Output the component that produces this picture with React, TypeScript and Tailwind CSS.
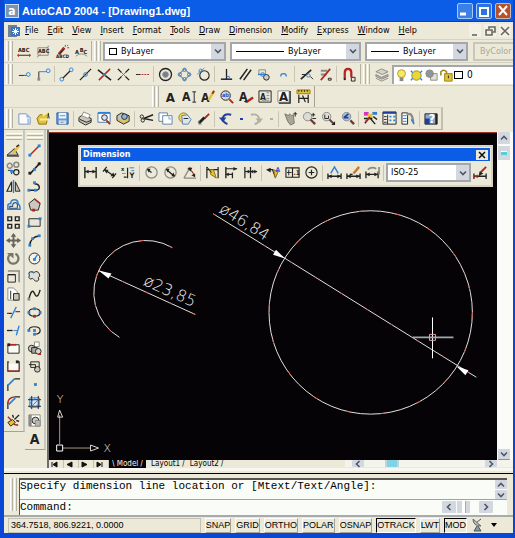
import { Fragment, type ReactNode } from 'react';

type Shape = {
  d?: string;
  s?: string;
  f?: string;
  w?: number;
  text?: string;
  x?: number;
  y?: number;
  size?: number;
};

const K = '#222222';
const B = '#2f7fd6';
const R = '#b3261e';
const G = '#8a8a86';
const Y = '#e3c23a';

const line = (d: string, s = K, w = 1): Shape => ({ d, s, w });
const fill = (d: string, f = K, s = 'none'): Shape => ({ d, f, s });
const label = (text: string, x: number, y: number, size: number, f = K): Shape => ({ text, x, y, size, f });

const dot = (x: number, y: number, c = B) => fill(`M${x - 1.5} ${y - 1.5}h3v3h-3z`, c);
const ring = (x: number, y: number, r: number, c = B, w = 1) =>
  line(`M${x - r} ${y}a${r} ${r} 0 1 0 ${r * 2} 0a${r} ${r} 0 1 0 ${-r * 2} 0`, c, w);
const disc = (x: number, y: number, r: number, f: string, s = K) =>
  fill(`M${x - r} ${y}a${r} ${r} 0 1 0 ${r * 2} 0a${r} ${r} 0 1 0 ${-r * 2} 0z`, f, s);

const icons: Record<string, Shape[]> = {
  // express text tools
  'Remote Text': [label('ABC', 1, 9, 6), line('M2 12h11', K), fill('M2 10v4l-2-2zM13 10v4l2-2z', R)],
  'Text Mask': [line('M2 4h11v8H2z', G), label('ABC', 2, 10, 6), line('M1 14L5 11M11 4l3-2', G)],
  'Explode Text': [label('ABCD', 1, 15, 5), line('M4 11L10 4', R, 3), line('M9 6L5 10', K), line('M11 1v2M15 4h-2M14 1l-1 1', R)],
  'Arc Aligned Text': [label('A', 1, 11, 6), label('B', 6, 8, 6), label('C', 10, 11, 6), line('M2 13q6-5 12 0', G)],
  // object snaps
  'Temporary Track Point': [line('M2 9h8', K), ring(12, 8, 2), line('M7 9h3', B)],
  'Snap From': [line('M3 14V5', K), line('M3 5h8', B), ring(13, 4, 2), dot(3, 13, G)],
  Endpoint: [line('M4 12L12 4', K, 1.3), ring(3, 13, 2), ring(13, 3, 2)],
  Midpoint: [line('M2 14L14 2', K, 1.3), ring(8, 8, 2)],
  Intersection: [line('M1 3l14 11', K, 1.6), line('M2 14L14 2', R, 1.6), dot(8, 8)],
  'Apparent Intersection': [line('M2 2l4 4M10 10l4 4M2 14l4-4M10 6l4-4', K, 1.5), line('M6 6l4 4M6 10l4-4', B)],
  Extension: [line('M1 8h5', K), line('M7 8h2M10 8h2M13 8h2', R)],
  Center: [ring(8, 8, 6.4, K, 1.4), disc(8, 8, 3, G, G), ring(8, 8, 1.5, B)],
  Quadrant: [line('M8 2l6 6-6 6-6-6z', G, 1.2), ring(8, 3, 1.8), ring(3, 8, 1.8), ring(13, 8, 1.8), ring(8, 13, 1.8)],
  Tangent: [ring(9, 9, 5, K, 1.2), line('M1 8L9 1', G), ring(5, 4, 1.8)],
  Perpendicular: [line('M8 2v11', K, 1.4), line('M2 13h12', K, 1.6), line('M8 10h3v3', B)],
  Parallel: [line('M2 13L10 2M6 14L14 3', K, 1.6)],
  Insert: [line('M2 3h7v5H2z', G), disc(10, 11, 3, '#cfcfc8', K), line('M1 8h7', B, 1.4), ring(6, 8, 2)],
  Node: [line('M5 10a3 3 0 0 1 6 0', B, 1.3)],
  Nearest: [line('M2 13L13 3', K, 1.7), line('M3 8h4M12 10l3 3', K), ring(10, 9, 1.8)],
  'Snap None': [line('M3 4h7M3 8h6', G, 2), line('M3 14L13 2', R, 1.8), line('M11 12h3v2h-3z', K)],
  'Object Snap Settings': [line('M4 13V6q0-4 3.500-4T11 6v5', R, 2.4), line('M3 13h2', K, 2), line('M11 11h4v4h-4z', K)],
  Layers: [fill('M2 5l6-3 7 3-6 3z', '#d6d3c2', G), fill('M2 8l6 3 7-3v2l-7 3-6-3z', '#b6b3a4', G), line('M2 12l6 3 7-3', G)],
  Bulb: [disc(8, 6, 4.2, '#f6e96a', '#b09a20'), fill('M6 10h4v4H6z', G)],
  Sun: [disc(8, 8, 5, '#ecd632', '#9b8a10'), line('M2 3l2 2M14 3l-2 2M2 13l2-2M14 13l-2-2', B, 1.4)],
  'Viewport Freeze': [fill('M7 6h7v7H7z', '#e2e2da', G), disc(6, 6, 4, '#8e959d', G)],
  Unlock: [line('M2 8V4q3-3 6 0v4', '#9b8210', 1.6), fill('M6 6h8v8H6z', Y, '#9b8210'), line('M10 8v3', K)],
  // text
  'Multiline Text': [label('A', 3, 14, 14)],
  'Single Line Text': [label('A', 0, 13, 13), line('M13 3v11M11 3h4M11 14h4', K)],
  'Edit Text': [label('A', 0, 14, 13), line('M14 2L8 12', Y, 2.6), line('M14 2l-2 3', R, 2)],
  'Find and Replace': [disc(6, 7, 5, '#d8d8d2', K), label('ab', 2, 9, 6, '#2f4fd6'), line('M10 11l4 4', R, 2)],
  'Text Style': [label('A', 0, 13, 13), line('M15 9l-7 5', R, 2.6), fill('M5 13l4-1-1 3z', K)],
  'Scale Text': [line('M1 2h13v12H1z', K), label('A', 2, 12, 9), line('M9 4h3M9 7h3M9 10h3M4 12h8', G)],
  'Justify Text': [fill('M1 2h12v12H1z', '#ffffff', G), line('M14 2v13H2', K, 1.4), label('A', 2, 13, 14)],
  'Convert Distance': [fill('M1 1h14v4H1z', Y, '#9b8210'), line('M3 1v2M6 1v2M9 1v2M12 1v2', K), line('M3 6v9M13 6v9M3 10h10M7 7l3 7', K, 1.3)],
  // standard
  New: [fill('M2 3h8l4 4v7H2z', '#fbfbff', '#7893b8'), fill('M10 3l4 4h-4z', '#8ab4e8'), line('M12 8v6', '#9fc0e8', 2)],
  Open: [fill('M1 8l3-4h9l-2 10H3z', Y, '#8b7410'), line('M7 5l7-4M4 9h9', '#f7eda0', 2), line('M13 2l1 6', K)],
  Save: [fill('M2 2h12v12H2z', '#5f9be0', '#2a5c9c'), fill('M4 2h8v6H4z', '#eef4fb'), fill('M4 10h8v4H4z', '#d8dde4'), line('M5 5h6M6 12h3', G)],
  Plot: [fill('M1 7l4-3 9 4v4l-6 3-7-4z', '#c9c6b8', K), fill('M4 5l2-4 7 3-2 4z', '#ffffff', G), line('M2 9l7 3 5-2', K)],
  'Plot Preview': [fill('M1 2h13v10H1z', '#ffffff', '#4a78b0'), line('M1 2h13', B, 2), disc(8, 7, 3, '#cfe4f7', K), line('M10 10l4 4', R, 2)],
  Publish: [fill('M1 5l5-3 8 3v6l-6 3-7-4z', '#c9c6b8', K), disc(9, 6, 3, '#8fb6dd', K), line('M3 9l5 3 5-3', Y, 2)],
  Cut: [line('M5 8L15 4M5 8l10 2', K, 1.5), ring(3, 6, 1.8, K), ring(4, 10, 1.8, K)],
  Copy: [fill('M1 2h9v9H1z', '#ffffff', '#6080a8'), fill('M5 5h10v9H5z', '#ffffff', '#6080a8'), fill('M11 5l4 4h-4z', '#9fc0e8')],
  Paste: [disc(7, 7, 5, '#ead76c', '#9b8210'), fill('M5 5l6-1 4 5-3 5H6z', '#dfe5ea', '#557fae'), line('M7 8h5', K)],
  'Match Properties': [line('M14 3L9 8', R, 2), line('M9 7L3 13', K, 3), line('M3 10v4h3', G)],
  Undo: [line('M4 8Q5 2 13 4M4 8q0 4 5 6', '#203f9c', 2.2), fill('M0 7h8l-4 5z', '#203f9c')],
  Redo: [line('M2 4q8-2 9 5M6 14q4-1 5-5', '#b3b0a0', 2), fill('M7 8h8l-4 5z', '#b3b0a0')],
  'Pan Realtime': [fill('M2 3l4 2 1-2 2 2 2-1 1 9-4 2-3-4z', '#aaa594', '#77756c'), line('M13 1v5M11 3h4', K)],
  'Zoom Realtime': [disc(6, 6, 4.5, '#dcdcd6', G), line('M9 9l5 5', '#6b3d36', 2.4), line('M12 2v4M10 4h4M11 8h4', K)],
  'Zoom Window': [disc(6, 6, 4.5, '#dcdcd6', G), line('M4 4v4h4V5', K), line('M9 9l5 5', '#6b3d36', 2.2), fill('M11 15h4v-4z')],
  'Zoom Previous': [disc(7, 6, 4.5, '#a8bfdf', G), line('M11 10l4 4', '#6b3d36', 2.4), line('M4 7l5-4M4 7h5', '#203f9c', 1.8)],
  Properties: [fill('M1 1h5v4H1z', '#d833c0'), fill('M5 3h5v4H5z', Y), fill('M10 1h5v3h-5z', B), line('M1 8h9M2 13L7 7l6 7M11 6l4 3', K, 1.5), line('M3 11l4-4', R, 2)],
  'Design Center': [fill('M1 1h14v13H1z', '#f4f1df', K), line('M1 2h14', '#203f9c', 2), line('M6 4v10', K), fill('M8 5h2v2H8zM12 5h2v2h-2zM8 9h2v2H8zM12 9h2v2h-2z', B), line('M2 6h3M2 9h3M2 12h3', K)],
  'Tool Palettes': [fill('M1 2h6v12H1z', '#ffffff', K), line('M2 5h4M2 8h4M2 11h4', B), line('M6 4q6-4 7 8', G, 2.4), line('M11 9l3 5', B, 1.6)],
  Help: [fill('M1 3h13v11H1z', '#8fa9c6', K), fill('M1 8h5v6H1z', '#203f9c'), label('?', 5, 13, 13, '#ffffff'), line('M13 3v11', K, 2)],
  // modify
  Erase: [fill('M1 13L9 6l4 7z', '#c7c4b4', K), line('M14 3L8 10', Y, 2.6), line('M1 14h13', K), line('M11 4l3-2', K, 1.5)],
  'Copy Object': [ring(4, 5, 2.6, G, 1.6), ring(11, 4, 2.6, G, 1.6), ring(11, 12, 2.8, K, 1.3), line('M2 10h4v4', K), dot(6, 11, B)],
  Mirror: [line('M1 13L6 3v10z', K, 1.2), line('M8 1v14', B, 1.4), fill('M15 13L10 3v10z', '#c7c4b4', K)],
  Offset: [line('M2 13V9q0-2 3-2 0-4 4-4t4 5q2 0 2 5z', B, 1.6), line('M4 12v-2h3q0-4 3-4t2 6z', '#39547a', 1.2)],
  Array: [line('M2 2h4v4H2zM10 2h4v4h-4zM2 10h4v4H2zM10 10h4v4h-4z', K, 1.5)],
  Move: [line('M8 2v12M2 8h12', '#66645c', 2), fill('M8 0l3 4H5zM8 16l3-4H5zM0 8l4-3v6zM16 8l-4-3v6z', '#66645c')],
  Rotate: [line('M4 4a5.500 5.500 0 1 0 6-1', '#77756c', 2.4), fill('M1 2h7v6z', '#77756c')],
  Scale: [line('M2 2h12v12', G, 1.6), line('M2 6h8v8H2z', K), line('M2 6h8', K, 1.4)],
  Stretch: [fill('M2 1h6l4 4v9H2z', '#ffffff', G), fill('M8 7h6v7H8z', '#c7c4b4', K), line('M5 4v9', K)],
  Trim: [line('M1 9h5M10 7h5', R, 1.3), line('M11 2L5 14', B, 1.4), line('M3 9h3', K)],
  Extend: [line('M1 8h6', K, 1.4), line('M8 8h4', B), line('M14 3l-3 10', B, 1.4)],
  'Break at Point': [fill('M2 4h12v9H2z', '#fbfbf6', K), line('M2 4h9', R, 1.8), dot(3, 4, K)],
  Break: [line('M3 3H2v10h12V3h-3', K, 1.3), fill('M3 5h10v7H3z', '#fbfbf6'), line('M2 13h12', R, 1.6), dot(12, 3, K)],
  Chamfer: [line('M2 15V8M9 2h6', K, 1.3), line('M2 9L9 2', B, 1.8)],
  Fillet: [line('M2 15V8M9 2h6', K, 1.3), line('M2 9q0-6 7-7', R, 1.6), line('M3 10L10 3', B, 1.8)],
  Explode: [fill('M2 10l5-3 3 3-5 4z', Y, K), line('M9 7l5-5M11 8l3 1M8 5L7 2', K, 1.5), line('M2 4l4 4M8 12l5 1', R, 1.5)],
  // draw
  Line: [line('M3 13L13 3', R, 1.6), dot(3, 13), dot(13, 3)],
  'Construction Line': [line('M3 14L14 2', K, 1.6), dot(8, 9, B), dot(3, 13, K), dot(13, 3, K)],
  Polyline: [line('M2 12h8q4-1 3-4T8 5', K, 1.5), dot(2, 12), dot(9, 12), dot(8, 4)],
  Polygon: [fill('M8 2l6 5-2 7H4L2 7z', '#c9c9c2', K), line('M8 2l6 5', R, 1.6), dot(7, 14, R)],
  Rectangle: [fill('M2 4h12v8H2z', '#e6e6df', K), dot(2, 12), dot(14, 4)],
  Arc: [line('M3 14Q3 4 14 3', K, 1.5), dot(3, 13), dot(6, 6), dot(13, 3)],
  Circle: [disc(8, 8, 5.8, '#f4f2e6', K), line('M8 9l3-5', B, 1.5), dot(8, 9)],
  'Revision Cloud': [fill('M2 4q2-3 5 0 4-3 6 1 2 3-1 4 2 4-3 4-2-2-3-3-3 2-4-1 1-2-0-5z', '#dfdfd8', K), line('M3 3h4', B, 1.5)],
  Spline: [line('M2 13Q5 0 8 7t6-4', K, 1.5), dot(2, 13, G)],
  Ellipse: [line('M2 8q0-4 6-4t6 4-6 4-6-4z', K, 1.3), dot(2, 8), dot(14, 8), dot(8, 4), dot(8, 12, R)],
  'Ellipse Arc': [line('M2 8q0-4 6-4t6 4-6 4', K, 1.3), dot(2, 8), dot(8, 12), dot(8, 8)],
  'Insert Block': [fill('M8 1h5v5H8z', '#ffffff', G), disc(5, 8, 3.5, '#c9c9c2', K), fill('M5 7h6v6H5z', '#a9a99f', K), disc(12, 11, 3, '#d8d8d0', K), fill('M11 15h4v-3z', R)],
  'Make Block': [fill('M4 3h9v6H4z', '#e6e3d0', K), disc(11, 11, 3, '#c9c9c2', K), line('M2 6h7v4', K)],
  Point: [dot(9, 8)],
  Hatch: [fill('M3 3h10v10H3z', '#d6e6f7', B), line('M1 5h14M1 12h14M5 1v14M12 1v14', K), line('M3 9l6-6M4 13l9-9M9 13l4-4', B)],
  Region: [fill('M2 2h12v12H2z', '#ffffff', G), fill('M2 2h3v12H2z', '#8a8a86'), disc(9, 8, 3.6, '#c9c9c2', K), fill('M9 8h5v6H9z', '#b9b9b2', G)],
  'Text A': [label('A', 3, 14, 15)],
  // dimension
  'Linear Dimension': [line('M2 2v12M14 2v12', K, 1.5), line('M2 7h12', K, 1.3), fill('M2 7l4-2v4zM14 7l-4-2v4z')],
  'Aligned Dimension': [line('M3 5l10 7M1 7l4-5M11 14l4-5', K, 1.3), fill('M2 5l5 0-2 4zM14 12H9l3-4z')],
  'Ordinate Dimension': [line('M7 3v11M3 13h3', K, 1.3), label('x', 0, 6, 6), label('Y', 9, 14, 8), line('M9 3h5M11 6h3', B), line('M1 9h4', G)],
  'Radius Dimension': [ring(8, 8, 6, G, 1.3), line('M8 8L4 5', K, 1.4), fill('M3 4l4 0-2 4z')],
  'Diameter Dimension': [ring(8, 8, 6, G, 1.3), line('M4 5l8 7', K, 1.4), fill('M3 4h4L5 8zM13 12H9l2-4z')],
  'Angular Dimension': [line('M2 14h13M2 14L9 2', G, 1.3), line('M6 4q6 2 7 8', R, 1.3), fill('M6 3h5L9 7zM14 13l-4-2 4-2z')],
  'Quick Dimension': [line('M2 2v12M14 2v12M2 5h12', K, 1.3), fill('M5 5l4 0 3 9-6-4z', Y, '#8b6b10'), line('M2 2l5 6', K)],
  'Baseline Dimension': [line('M2 2v12', K, 1.5), line('M2 4h12M2 10h7M9 8v6', K, 1.3), fill('M14 4l-4-2v4zM2 10l3-2v4z')],
  'Continue Dimension': [line('M2 2v12M8 2v12', K, 1.3), line('M2 7h13', K, 1.3), fill('M8 7L5 5v4zM8 7l3-2v4zM15 7l-3-2v4z')],
  'Quick Leader': [line('M2 5h5l3 8', K, 1.3), fill('M0 5l5-2v5z'), fill('M8 5l5 2-3 7z', Y, '#8b6b10'), label('A', 10, 7, 7, '#2f4fd6')],
  Tolerance: [line('M1 3h14v10H1zM8 3v10', K, 1.2), line('M2 8h5M4 5v6', K), label('.1', 9, 11, 7)],
  'Center Mark': [ring(8, 8, 6, K, 1.2), line('M8 5v6M5 8h6', K, 1.3)],
  'Dimension Edit': [line('M1 9v6M15 9v6M1 12h14', K, 1.4), line('M4 9l4-7 4 7', B, 1.5), fill('M1 12l4-2v4zM15 12l-4-2v4z', K)],
  'Dimension Text Edit': [line('M1 9v6M15 9v6M1 12h14', K, 1.4), line('M14 2L8 9', '#c87933', 2.6), line('M7 10H4', K, 1.5), fill('M1 12l4-2v4zM15 12l-4-2v4z', K)],
  'Dimension Update': [line('M1 7v7M14 7v7M1 10h13', K, 1.4), line('M3 5q4-4 9-1M15 2v8', G, 1.8), fill('M1 10l4-2v4zM14 10l-4-2v4z')],
  'Dimension Style': [line('M1 9v6M14 9v6M1 12h13', K, 1.4), line('M14 2L8 8', R, 2), fill('M6 12l1-5 4 2z'), fill('M1 12l4-2v4z', R)],
};

function Icon({ name }: { name: string }) {
  return (
    <svg viewBox="0 0 16 16" className="block h-[15px] w-[15px] shrink-0" aria-hidden="true">
      {icons[name].map((shape, i) =>
        shape.text ? (
          <text key={i} x={shape.x} y={shape.y} fontSize={shape.size} fill={shape.f} className="font-bold">
            {shape.text}
          </text>
        ) : (
          <path key={i} d={shape.d} stroke={shape.s} fill={shape.f ?? 'none'} strokeWidth={shape.w ?? 1} />
        ),
      )}
    </svg>
  );
}

function ToolButton({ name }: { name: string }) {
  return (
    <button type="button" aria-label={name} className="flex h-[18px] w-[19px] shrink-0 items-center justify-center">
      <Icon name={name} />
    </button>
  );
}

function Grip() {
  return (
    <div className="mx-[2px] flex shrink-0 gap-px self-stretch">
      <div className="w-[3px] border-l border-r border-l-white border-r-[#b5b2a1]" />
      <div className="w-[3px] border-l border-r border-l-white border-r-[#b5b2a1]" />
    </div>
  );
}

function Separator() {
  return <div className="mx-px h-4 w-[2px] shrink-0 border-l border-[#c8c5b2]" />;
}

function Tools({ groups }: { groups: string[][] }) {
  return (
    <>
      {groups.map((group, i) => (
        <Fragment key={i}>
          {i > 0 && <Separator />}
          {group.map((name) => (
            <ToolButton key={name} name={name} />
          ))}
        </Fragment>
      ))}
    </>
  );
}

function Chevron({ className = '' }: { className?: string }) {
  return (
    <svg viewBox="0 0 8 8" className={`h-2 w-2 ${className}`} aria-hidden="true">
      <path d="M1 2.500l3 3 3-3" fill="none" stroke="#4d5766" strokeWidth="1.600" />
    </svg>
  );
}

type ComboProps = { name: string; value: string; className: string; pad: string; mark?: ReactNode; disabled?: boolean };

function Combo({ name, value, className, pad, mark, disabled }: ComboProps) {
  return (
    <div className={`relative h-[19px] border-2 ${disabled ? 'border-[#c9c7ba]' : 'border-[#a3a6ab] bg-white'} ${className}`}>
      <select
        aria-label={name}
        disabled={disabled}
        className={`block h-full w-full appearance-none bg-transparent text-[9px] leading-none ${pad} ${disabled ? 'text-[#aaa899] opacity-100' : 'text-black'}`}
      >
        <option>{value}</option>
      </select>
      {mark}
      {!disabled && (
        <span className="pointer-events-none absolute inset-y-0 right-0 flex w-[13px] items-center justify-center bg-[#d3d7de]">
          <Chevron />
        </span>
      )}
    </div>
  );
}

function TitleBar() {
  return (
    <header className="flex h-[22px] items-center border-b border-[#0a3fb4] bg-[#0b5ce6] pl-px">
      <span className="mr-[3px] flex h-[14px] w-[14px] items-center justify-center border border-[#cfe0f7] bg-[#7d95ac] text-[12px] font-bold leading-none text-white">
        a
      </span>
      <h1 className="flex-1 truncate font-['Liberation_Sans'] text-[11px] font-bold leading-[14px] text-white">
        AutoCAD 2004 - [Drawing1.dwg]
      </h1>
      <div className="flex gap-[3px] pr-[2px] pt-px">
        <button type="button" aria-label="Minimize" className="h-4 w-4 rounded-[2px] border border-[#a8c8f5] bg-[#3a80e6]">
          <svg viewBox="0 0 14 14"><path d="M2 10h6" stroke="#fff" strokeWidth="3" /></svg>
        </button>
        <button type="button" aria-label="Maximize" className="h-4 w-4 rounded-[2px] border border-[#a8c8f5] bg-[#2c72e0]">
          <svg viewBox="0 0 14 14"><path d="M3 4v8h8V4M2 4h10" fill="none" stroke="#fff" strokeWidth="2" /></svg>
        </button>
        <button type="button" aria-label="Close" className="h-4 w-4 rounded-[2px] border border-[#cdb9ae] bg-[#b5512c]">
          <svg viewBox="0 0 14 14"><path d="M3 2l8 9M11 2l-8 9" stroke="#fff" strokeWidth="2" /></svg>
        </button>
      </div>
    </header>
  );
}

const menus = ['File', 'Edit', 'View', 'Insert', 'Format', 'Tools', 'Draw', 'Dimension', 'Modify', 'Express', 'Window', 'Help'];

function MenuBar() {
  return (
    <nav className="flex h-[18px] items-center border-b border-[#d5d2c1] pl-1">
      <svg viewBox="0 0 12 12" className="mr-[5px] h-3 w-3" aria-hidden="true">
        <path d="M0 0h9v12H0z" fill="#6e8195" />
        <path d="M3 2h9v9H3z" fill="#2f76cf" />
        <path d="M7.500 3v7M4 6.500h7M5 4l5 5M10 4L5 9" stroke="#fff" />
      </svg>
      <div className="flex flex-1 gap-[9px] text-[9px] leading-none">
        {menus.map((menu) => (
          <button key={menu} type="button">
            <span className="underline underline-offset-1">{menu[0]}</span>
            {menu.slice(1)}
          </button>
        ))}
      </div>
      <div className="flex gap-[3px] pr-[2px]">
        {[
          ['Minimize drawing', 'M3 10h5'],
          ['Restore drawing', 'M5 4V2h6v5H9M2 5h6v5H2z'],
          ['Close drawing', 'M2 2l8 8M10 2l-8 8'],
        ].map(([name, d]) => (
          <button key={name} type="button" aria-label={name} className="h-[13px] w-3 bg-[#f3f1e6]">
            <svg viewBox="0 0 12 12"><path d={d} fill="none" stroke="#68675f" strokeWidth="1.600" /></svg>
          </button>
        ))}
      </div>
    </nav>
  );
}

function Toolbars() {
  return (
    <>
      <div className="flex h-[23px] items-center overflow-hidden border-b border-[#d5d2c1] py-px">
        <Grip />
        <Tools groups={[['Remote Text', 'Text Mask', 'Explode Text', 'Arc Aligned Text']]} />
        <div className="w-1 self-stretch border-r border-[#b5b2a1]" />
        <Grip />
        <Combo
          name="Color"
          value="ByLayer"
          className="w-[123px] shrink-0"
          pad="pl-4"
          mark={<span className="pointer-events-none absolute left-1 top-1 h-[7px] w-2 border border-black" />}
        />
        <Combo
          name="Linetype"
          value="ByLayer"
          className="ml-1 w-[131px] shrink-0"
          pad="pl-14"
          mark={<span className="pointer-events-none absolute left-1 top-[7px] h-px w-12 bg-black" />}
        />
        <Combo
          name="Lineweight"
          value="ByLayer"
          className="ml-1 w-[103px] shrink-0"
          pad="pl-9"
          mark={<span className="pointer-events-none absolute left-1 top-[7px] h-px w-7 bg-black" />}
        />
        <Combo name="Plot style" value="ByColor" className="ml-[5px] min-w-[60px] flex-1" pad="pl-[5px]" disabled />
      </div>
      <div className="flex h-[23px] items-center overflow-hidden border-b border-[#d5d2c1] py-px">
        <Grip />
        <Tools
          groups={[
            ['Temporary Track Point', 'Snap From'],
            ['Endpoint', 'Midpoint', 'Intersection', 'Apparent Intersection', 'Extension'],
            ['Center', 'Quadrant', 'Tangent'],
            ['Perpendicular', 'Parallel', 'Insert', 'Node'],
            ['Nearest', 'Snap None'],
            ['Object Snap Settings'],
          ]}
        />
        <div className="w-[3px] self-stretch border-r border-[#b5b2a1]" />
        <Grip />
        <ToolButton name="Layers" />
        <div className="ml-px flex h-[19px] flex-1 items-center border-l-2 border-t-2 border-[#a3a6ab] bg-white text-[10px] leading-none">
          {['Bulb', 'Sun', 'Viewport Freeze', 'Unlock'].map((name) => (
            <Icon key={name} name={name} />
          ))}
          <span className="mr-1 h-2 w-[9px] border border-black" />
          <select aria-label="Layer" className="flex-1 appearance-none bg-transparent leading-none">
            <option>0</option>
          </select>
        </div>
      </div>
      <div className="flex h-[21px] items-center pl-[146px]">
        <Grip />
        <Tools
          groups={[
            ['Multiline Text', 'Single Line Text', 'Edit Text', 'Find and Replace', 'Text Style', 'Scale Text', 'Justify Text', 'Convert Distance'],
          ]}
        />
        <div className="w-[2px] self-stretch border-r border-[#a5a292]" />
      </div>
      <div className="flex">
        <div className="flex h-[23px] items-center border-b border-r-2 border-t border-b-[#b5b2a1] border-r-[#c2bfae] border-t-[#d5d2c1] py-px">
          <Grip />
          <Tools
            groups={[
              ['New', 'Open', 'Save'],
              ['Plot', 'Plot Preview', 'Publish'],
              ['Cut', 'Copy', 'Paste', 'Match Properties'],
              ['Undo'],
            ]}
          />
          <button type="button" aria-label="Undo list" className="flex w-[11px] justify-center">
            <span className="h-[2px] w-[3px] bg-[#203f9c]" />
          </button>
          <ToolButton name="Redo" />
          <button type="button" aria-label="Redo list" className="flex w-[11px] justify-center">
            <span className="h-[2px] w-[3px] bg-[#b3b0a0]" />
          </button>
          <Separator />
          <Tools
            groups={[
              ['Pan Realtime', 'Zoom Realtime', 'Zoom Window', 'Zoom Previous'],
              ['Properties', 'Design Center', 'Tool Palettes'],
              ['Help'],
            ]}
          />
        </div>
      </div>
    </>
  );
}

const modifyTools = [
  'Erase', 'Copy Object', 'Mirror', 'Offset', 'Array', 'Move', 'Rotate', 'Scale', 'Stretch', 'Trim', 'Extend',
  'Break at Point', 'Break', 'Chamfer', 'Fillet', 'Explode',
];

const drawTools = [
  'Line', 'Construction Line', 'Polyline', 'Polygon', 'Rectangle', 'Arc', 'Circle', 'Revision Cloud', 'Spline',
  'Ellipse', 'Ellipse Arc', 'Insert Block', 'Make Block', 'Point', 'Hatch', 'Region', 'Text A',
];

function Palette({ names }: { names: string[] }) {
  return (
    <div className="flex flex-col items-center self-start border-b border-r-2 border-b-[#a5a292] border-r-[#c5c6c6] pb-[2px] pt-[3px]">
      <div className="mb-px flex w-4 flex-col gap-px">
        <div className="h-[3px] border-b border-t border-b-[#b5b2a1] border-t-white" />
        <div className="h-[3px] border-b border-t border-b-[#b5b2a1] border-t-white" />
      </div>
      {names.map((name) => (
        <ToolButton key={name} name={name} />
      ))}
    </div>
  );
}

function DimensionToolbar() {
  return (
    <section className="absolute left-[29px] right-1 top-3 border-2 border-[#d5d2c8] bg-[#ece9d8] p-px">
      <div className="flex h-[13px] items-center bg-[#0b5ce6] px-[2px]">
        <h2 className="flex-1 font-['DejaVu_Sans'] text-[8px] font-bold leading-none text-white">Dimension</h2>
        <button type="button" aria-label="Close toolbar" className="h-[10px] w-3 bg-[#ece9d8]">
          <svg viewBox="0 0 12 10" className="block"><path d="M3 2l6 6M9 2L3 8" stroke="#111" strokeWidth="1.500" /></svg>
        </button>
      </div>
      <div className="flex h-[23px] items-center">
        <Tools
          groups={[
            ['Linear Dimension', 'Aligned Dimension', 'Ordinate Dimension'],
            ['Radius Dimension', 'Diameter Dimension', 'Angular Dimension'],
            ['Quick Dimension', 'Baseline Dimension', 'Continue Dimension'],
            ['Quick Leader', 'Tolerance', 'Center Mark'],
            ['Dimension Edit', 'Dimension Text Edit', 'Dimension Update'],
          ]}
        />
        <Separator />
        <Combo name="Dimension style" value="ISO-25" className="min-w-0 flex-1" pad="pl-[3px]" />
        <ToolButton name="Dimension Style" />
      </div>
    </section>
  );
}

function Drawing() {
  return (
    <svg viewBox="0 0 448 328" className="min-h-0 min-w-0 flex-1" role="img" aria-label="Drawing area">
      <g fill="none" stroke="#e4e0dc">
        <circle cx="322" cy="180" r="102" />
        <circle cx="322" cy="180" r="102" stroke="#d8564c" strokeDasharray="5 31" />
        <path d="M164 81L428 245" />
        <path d="M164 81L428 245" stroke="#d8564c" strokeDasharray="3 27" />
        <path d="M123 115A52 52 0 0 0 70 205" />
        <path d="M123 115A52 52 0 0 0 70 205" stroke="#d8564c" strokeDasharray="4 26" />
        <path d="M49 138L146 182" />
        <path d="M49 138L146 182" stroke="#d8564c" strokeDasharray="3 23" />
      </g>
      <path d="M236 126l-12-4 3-5zM408 234l12 4-3 5zM49 138l13 3-3 5z" fill="#fff" />
      <g fill="#f4f0ec" className="font-['DejaVu_Sans'] font-extralight" fontSize="16">
        <text transform="translate(169 79) rotate(32)">ø46,84</text>
        <text transform="translate(93 152) rotate(24)">ø23,85</text>
      </g>
      <path d="M384 185v41" stroke="#fff" />
      <path d="M364 205h41" stroke="#a5a5a5" strokeWidth="2" />
      <path d="M381 202h6v6h-6z" fill="none" stroke="#d9a6a2" />
      <g fill="none" stroke="#a39a7c">
        <path d="M10 312V283M13 316h28" />
        <path d="M7 313h6v6H7z" stroke="#fff" />
        <path d="M8 285l2-7 3 7zM41 313l8 3-8 3z" stroke="#ded9d4" />
      </g>
      <g fill="#e4e0dc" className="font-['DejaVu_Sans'] font-extralight" fontSize="11">
        <text x="7" y="271">Y</text>
        <text x="54" y="320">X</text>
      </g>
    </svg>
  );
}

function ScrollButton({ name, rotate = '', className }: { name: string; rotate?: string; className: string }) {
  return (
    <button type="button" aria-label={name} className={`flex items-center justify-center rounded-[1px] bg-[#d3d8e0] ${className}`}>
      <Chevron className={rotate} />
    </button>
  );
}

function Workspace() {
  return (
    <main className="flex min-h-0 flex-1">
      <Palette names={modifyTools} />
      <Palette names={drawTools} />
      <div className="ml-px flex min-w-0 flex-1 flex-col border-l-2 border-[#6e6d6b] pt-[2px]">
        <div className="flex min-h-0 flex-1">
          <div className="relative flex min-w-0 flex-1 border-t border-[#9c3128] bg-[#050306]">
            <Drawing />
            <DimensionToolbar />
          </div>
          <div className="flex w-4 flex-col items-center bg-[#fbfcf8] pr-[2px]">
            <ScrollButton name="Scroll up" rotate="rotate-180" className="h-3 w-3" />
            <div className="mt-[2px] flex h-[14px] w-3 items-center justify-center bg-[#d3d8e0]">
              <span className="h-1 w-[6px] border-t border-white bg-[#54cfd6]" />
            </div>
            <div className="flex-1" />
            <ScrollButton name="Scroll down" className="h-[11px] w-3 border-b border-[#5a9bea]" />
          </div>
        </div>
        <div className="flex h-2 shrink-0 items-start text-[8px] leading-[8px]">
          {[
            ['First tab', 'M3 2v5M8 2L4 4.500 8 7z'],
            ['Previous tab', 'M8 2L3 4.500 8 7z'],
            ['Next tab', 'M3 2l5 2.500L3 7z'],
            ['Last tab', 'M3 2l4 2.500L3 7zM8 2v5'],
          ].map(([name, d]) => (
            <button key={name} type="button" aria-label={name} className="h-full w-[15px] border-r border-[#c5c2b1]">
              <svg viewBox="0 0 14 8" className="block h-full"><path d={d} fill="#111" stroke="#111" /></svg>
            </button>
          ))}
          <button type="button" className="bg-[#050306] px-[3px] text-[#f5f5f5]">\ Model /</button>
          <button type="button" className="pl-[5px]">Layout1 /</button>
          <button type="button" className="pl-[5px]">Layout2 /</button>
          <div className="flex-1" />
          <div className="flex w-[168px] shrink-0 bg-[#f4f3ec] pr-4">
            <ScrollButton name="Scroll left" rotate="rotate-90" className="ml-[7px] h-[7px] w-3" />
            <div className="flex-1" />
            <div className="h-[7px] w-[14px] border-x-2 border-[#c5d2e0] bg-[#7dd5e4]" />
            <div className="flex-[4]" />
            <ScrollButton name="Scroll right" rotate="-rotate-90" className="h-[7px] w-3" />
          </div>
        </div>
      </div>
    </main>
  );
}

function CommandLine() {
  return (
    <section className="border-t-[3px] border-[#f8f7f0]">
      <div className="h-[2px]" />
      <div className="h-px bg-black" />
      <div className="flex h-[41px] pt-1">
        <div className="mb-1 ml-1 flex">
          <Grip />
        </div>
        <div className="mr-[6px] flex min-w-0 flex-1 flex-col border-l border-t-2 border-[#55544f] bg-[#fafcf8] font-['Liberation_Mono'] text-[11px] leading-none">
          <div className="flex h-5 items-start border-b border-[#a3a39c]">
            <p className="flex-1 truncate leading-[12px]">Specify dimension line location or [Mtext/Text/Angle]:</p>
            <div className="flex w-3 flex-col gap-px">
              <ScrollButton name="History up" rotate="rotate-180" className="h-[9px]" />
              <ScrollButton name="History down" className="h-[9px]" />
            </div>
          </div>
          <div className="flex h-[14px] items-center pr-[14px]">
            <label htmlFor="command">Command:</label>
            <input id="command" type="text" className="min-w-0 flex-1 bg-transparent" />
            <ScrollButton name="Command left" rotate="rotate-90" className="h-3 w-[14px]" />
            <div className="mx-px flex h-3 w-[13px] justify-center bg-[#d3d8e0]">
              <span className="h-full w-1 border-r border-[#54cfd6] bg-white" />
            </div>
            <ScrollButton name="Command right" rotate="-rotate-90" className="ml-2 h-3 w-[14px]" />
          </div>
        </div>
      </div>
    </section>
  );
}

const modes = [
  { name: 'SNAP', on: false },
  { name: 'GRID', on: false },
  { name: 'ORTHO', on: false },
  { name: 'POLAR', on: false },
  { name: 'OSNAP', on: false },
  { name: 'OTRACK', on: true },
  { name: 'LWT', on: false },
  { name: 'MOD', on: true },
];

function StatusBar() {
  return (
    <footer className="flex h-[18px] items-center gap-1 border-t-2 border-[#a9abab] pl-1 font-['Liberation_Sans'] text-[9px] leading-none">
      <div className="flex h-[15px] min-w-0 flex-1 items-center whitespace-nowrap border border-[#c5c2b1] px-[2px]">
        364.7518, 806.9221, 0.0000
      </div>
      {modes.map(({ name, on }) => (
        <button
          key={name}
          type="button"
          aria-pressed={on}
          className={`h-[15px] border ${on ? 'border-b-white border-l-black border-r-white border-t-black' : 'border-b-[#a5a292] border-l-white border-r-[#a5a292] border-t-white'}`}
        >
          {name}
        </button>
      ))}
      <svg viewBox="0 0 12 14" className="h-[14px] w-3" aria-hidden="true">
        <path d="M2 1q0 7 8 7z" fill="#b4bcc6" stroke="#666" />
        <path d="M6 4l4-3M6 8l-3 5h7L7 8" fill="#8c97a5" stroke="#555" />
      </svg>
      <button type="button" aria-label="Status bar menu" className="ml-1 mr-4">
        <svg viewBox="0 0 6 4" className="h-1 w-[6px]"><path d="M0 0h6L3 4z" /></svg>
      </button>
    </footer>
  );
}

export default function App() {
  return (
    <div className="flex h-screen w-full flex-col overflow-hidden border-b-[5px] border-l-4 border-r-2 border-[#0b47d6] bg-[#ece9d8] font-['DejaVu_Sans_Condensed','DejaVu_Sans',sans-serif] text-black">
      <TitleBar />
      <MenuBar />
      <Toolbars />
      <Workspace />
      <CommandLine />
      <StatusBar />
    </div>
  );
}
